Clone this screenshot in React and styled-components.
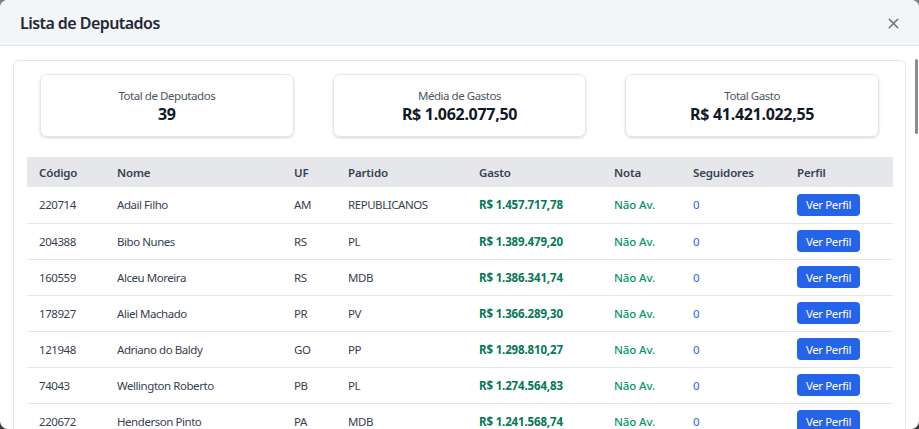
import React from 'react';
import styled, { createGlobalStyle } from 'styled-components';
import { X } from 'lucide-react';

const GlobalStyle = createGlobalStyle`
  html, body {
    margin: 0;
    padding: 0;
    height: 100%;
    overflow: hidden;
  }
  body {
    font-family: 'Noto Sans', 'Liberation Sans', sans-serif;
    background: linear-gradient(#7d7f82, #3b3c3e);
  }
  #root {
    height: 100%;
  }
`;

const deputados = [
  { id: '220714', nome: 'Adail Filho', uf: 'AM', partido: 'REPUBLICANOS', gasto: 'R$ 1.457.717,78' },
  { id: '204388', nome: 'Bibo Nunes', uf: 'RS', partido: 'PL', gasto: 'R$ 1.389.479,20' },
  { id: '160559', nome: 'Alceu Moreira', uf: 'RS', partido: 'MDB', gasto: 'R$ 1.386.341,74' },
  { id: '178927', nome: 'Aliel Machado', uf: 'PR', partido: 'PV', gasto: 'R$ 1.366.289,30' },
  { id: '121948', nome: 'Adriano do Baldy', uf: 'GO', partido: 'PP', gasto: 'R$ 1.298.810,27' },
  { id: '74043', nome: 'Wellington Roberto', uf: 'PB', partido: 'PL', gasto: 'R$ 1.274.564,83' },
  { id: '220672', nome: 'Henderson Pinto', uf: 'PA', partido: 'MDB', gasto: 'R$ 1.241.568,74' },
];

const stats = [
  { label: 'Total de Deputados', value: '39' },
  { label: 'Média de Gastos', value: 'R$ 1.062.077,50' },
  { label: 'Total Gasto', value: 'R$ 41.421.022,55' },
];

const columns = [
  { title: 'Código', width: 78 },
  { title: 'Nome', width: 177 },
  { title: 'UF', width: 54 },
  { title: 'Partido', width: 131 },
  { title: 'Gasto', width: 135 },
  { title: 'Nota', width: 79 },
  { title: 'Seguidores', width: 104 },
  { title: 'Perfil', width: 108 },
];

function App() {
  return (
    <>
      <GlobalStyle />
      <Modal>
        <Header>
          <Title>Lista de Deputados</Title>
          <CloseButton aria-label='Fechar'>
            <X size={17} strokeWidth={2.2} />
          </CloseButton>
        </Header>
        <Body>
          <Card>
            <StatsRow>
              {stats.map((s) => (
                <StatCard key={s.label}>
                  <StatLabel>{s.label}</StatLabel>
                  <StatValue>{s.value}</StatValue>
                </StatCard>
              ))}
            </StatsRow>
            <Table>
              <colgroup>
                {columns.map((c) => (
                  <col key={c.title} style={{ width: c.width }} />
                ))}
              </colgroup>
              <thead>
                <tr>
                  {columns.map((c) => (
                    <Th key={c.title}>{c.title}</Th>
                  ))}
                </tr>
              </thead>
              <tbody>
                {deputados.map((d) => (
                  <Row key={d.id}>
                    <Td>{d.id}</Td>
                    <Td>{d.nome}</Td>
                    <Td>{d.uf}</Td>
                    <Td>{d.partido}</Td>
                    <Td $tone='gasto'>{d.gasto}</Td>
                    <Td $tone='nota'>Não Av.</Td>
                    <Td $tone='seguidores'>0</Td>
                    <Td>
                      <ProfileButton>Ver Perfil</ProfileButton>
                    </Td>
                  </Row>
                ))}
              </tbody>
            </Table>
          </Card>
          <ScrollThumb />
        </Body>
      </Modal>
    </>
  );
}

const Modal = styled.div`
  height: 100%;
  display: flex;
  flex-direction: column;
  background: #fff;
  border-radius: 8px;
  overflow: hidden;
`;

const Header = styled.div`
  height: 46px;
  box-sizing: border-box;
  flex-shrink: 0;
  display: flex;
  align-items: center;
  justify-content: space-between;
  padding: 1px 17px 0 20px;
  background: #f4f5f7;
  border-bottom: 1px solid #e5e7eb;
`;

const Title = styled.h2`
  margin: 0;
  font-size: 16px;
  font-weight: 600;
  letter-spacing: -0.55px;
  color: #1f2937;
`;

const CloseButton = styled.button`
  border: none;
  background: none;
  padding: 0;
  display: flex;
  color: #6b7280;
  cursor: pointer;
`;

const Body = styled.div`
  position: relative;
  flex: 1;
  overflow: hidden;
  padding: 14px 13px;
`;

/* stand-in for the thin overlay scrollbar of the list */
const ScrollThumb = styled.div`
  position: absolute;
  top: 13px;
  right: 1px;
  width: 3px;
  height: 75px;
  border-radius: 2px;
  background: #8c8c8c;
`;

const Card = styled.div`
  border: 1px solid #e5e7eb;
  border-radius: 6px;
  padding: 13px 13px;
  box-sizing: border-box;
`;

const StatsRow = styled.div`
  display: grid;
  grid-template-columns: repeat(3, 1fr);
  gap: 39px;
  padding: 0 13px;
  margin-bottom: 20px;
`;

const StatCard = styled.div`
  height: 63px;
  box-sizing: border-box;
  border: 1px solid #e5e7eb;
  border-radius: 7px;
  box-shadow: 0 1px 3px rgba(0, 0, 0, 0.12), 0 1px 2px rgba(0, 0, 0, 0.06);
  display: flex;
  flex-direction: column;
  align-items: center;
  justify-content: center;
  padding-top: 2px;
`;

const StatLabel = styled.div`
  font-size: 11.5px;
  line-height: 15px;
  letter-spacing: -0.45px;
  color: #4b5563;
`;

const StatValue = styled.div`
  font-size: 16px;
  line-height: 22px;
  font-weight: 700;
  letter-spacing: -0.3px;
  color: #111827;
`;

const Table = styled.table`
  width: 100%;
  border-collapse: collapse;
  table-layout: fixed;
  font-size: 11.5px;
`;

const Th = styled.th`
  background: #e5e7eb;
  text-align: left;
  font-weight: 600;
  letter-spacing: -0.15px;
  color: #374151;
  height: 30px;
  padding: 0 12px;
  box-sizing: border-box;
`;

const Row = styled.tr`
  border-bottom: 1px solid #e5e7eb;
`;

const tones = {
  gasto: { color: '#047857', weight: 700, spacing: '-0.15px' },
  nota: { color: '#059669', weight: 500, spacing: '-0.1px' },
  seguidores: { color: '#2563eb', weight: 400, spacing: '0' },
  base: { color: '#374151', weight: 400, spacing: '-0.45px' },
};

const Td = styled.td`
  height: 36px;
  padding: 0 12px;
  box-sizing: border-box;
  color: ${(p) => tones[p.$tone || 'base'].color};
  font-weight: ${(p) => tones[p.$tone || 'base'].weight};
  letter-spacing: ${(p) => tones[p.$tone || 'base'].spacing};
  white-space: nowrap;
`;

const ProfileButton = styled.button`
  background: #2563eb;
  color: #fff;
  border: none;
  border-radius: 4px;
  height: 22px;
  width: 63px;
  padding: 0;
  font-family: inherit;
  font-size: 11.5px;
  letter-spacing: -0.4px;
  cursor: pointer;
`;

export default App;
